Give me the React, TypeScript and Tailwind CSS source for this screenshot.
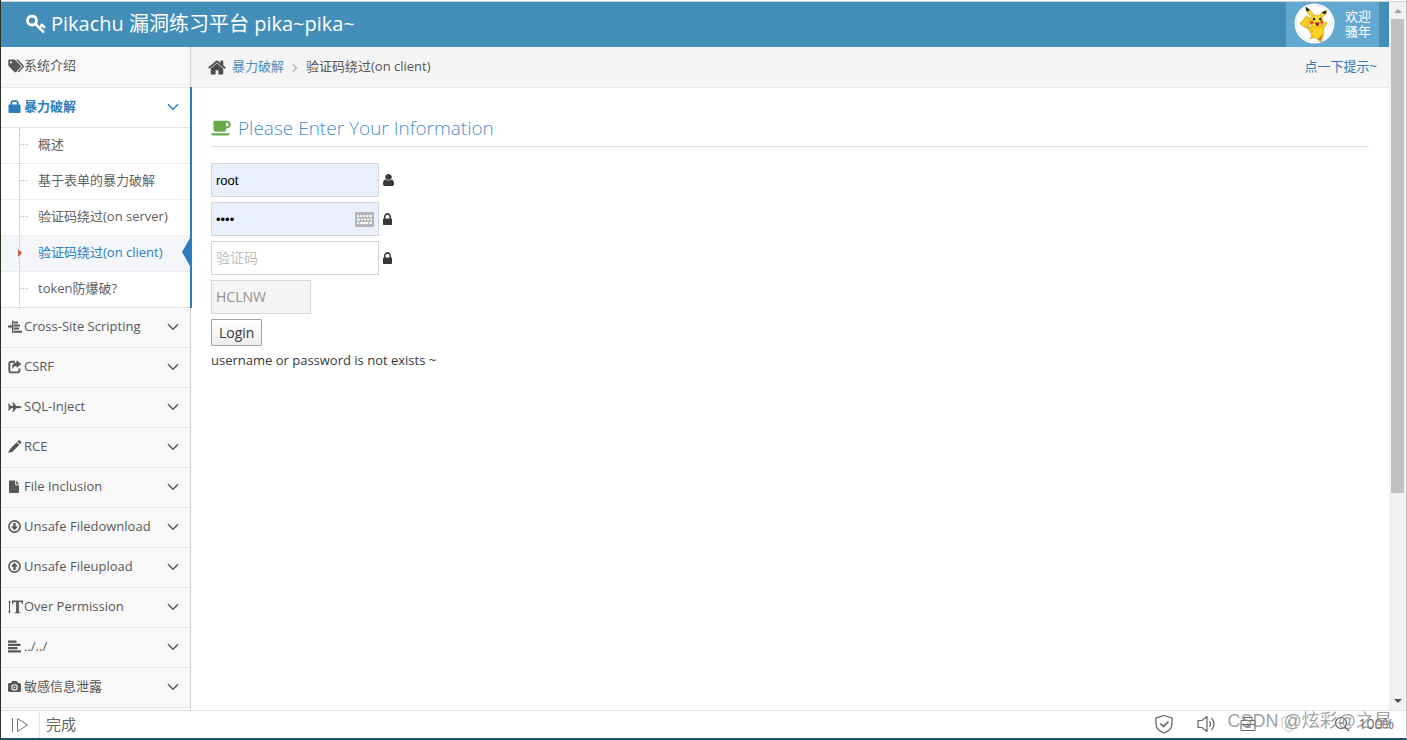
import React from "react";

const Chevron = () => (
  <svg viewBox="0 0 12 8" className="h-2 w-3" fill="none" stroke="currentColor" strokeWidth="1.4">
    <path d="M1 1.200 6 6.200 11 1.200" />
  </svg>
);

const Glyph = ({ children }: { children: React.ReactNode }) => (
  <svg viewBox="0 0 14 14" className="h-3.5 w-3.5" fill="currentColor">
    {children}
  </svg>
);

const KeyIcon = () => (
  <svg viewBox="0 0 20 20" className="h-5 w-5" fill="none" stroke="currentColor">
    <circle cx="6" cy="6.500" r="4.500" strokeWidth="2.800" />
    <path d="m9 9.500 8.300 8.300" strokeWidth="2.500" strokeLinecap="round" />
    <path d="m13.200 14 3.200-3.200" strokeWidth="2" />
    <path d="m15.700 10.600 2.600 2.600" strokeWidth="2.500" strokeLinecap="round" />
  </svg>
);

const HomeIcon = () => (
  <svg viewBox="64 192 1664 1408" className="h-[17px] w-[18px]" fill="currentColor">
    <path d="M1472 992v480q0 26-19 45t-45 19h-384v-384h-256v384h-384q-26 0-45-19t-19-45v-480q0-1 .5-3t.5-3l575-474 575 474q1 2 1 6zm223-69l-62 74q-8 9-21 11h-3q-13 0-21-7l-692-577-692 577q-12 8-24 7-13-2-21-11l-62-74q-8-10-7-23.500t11-21.500l719-599q32-26 76-26t76 26l244 204v-195q0-14 9-23t23-9h192q14 0 23 9t9 23v408l219 182q10 8 11 21.500t-7 23.500z" />
  </svg>
);

const UserIcon = () => (
  <svg viewBox="256 128 1280 1536" className="h-3 w-[11px]" preserveAspectRatio="none" fill="currentColor">
    <path d="M1536 1399q0 109-62.500 187t-150.500 78h-854q-88 0-150.500-78t-62.500-187q0-85 8.500-160.500t31.500-152 58.500-131 94-89 134.500-34.500q131 128 313 128t313-128q76 0 134.500 34.500t94 89 58.500 131 31.500 152 8.500 160.500zm-256-887q0 159-112.500 271.500t-271.500 112.500-271.500-112.500-112.500-271.500 112.500-271.500 271.500-112.500 271.500 112.500 112.500 271.500z" />
  </svg>
);

const LockIcon = () => (
  <svg viewBox="320 128 1152 1408" className="h-3 w-[9px]" preserveAspectRatio="none" fill="currentColor">
    <path d="M640 768h512v-192q0-106-75-181t-181-75-181 75-75 181v192zm832 96v576q0 40-28 68t-68 28h-960q-40 0-68-28t-28-68v-576q0-40 28-68t68-28h32v-192q0-184 132-316t316-132 316 132 132 316v192h32q40 0 68 28t28 68z" />
  </svg>
);

const TagsIcon = () => (
  <svg viewBox="0 0 16 14" className="h-3.5 w-4 shrink-0" fill="currentColor">
    <path fillRule="evenodd" d="M1.200.5h4.600c.5 0 1 .2 1.400.6l5.400 5.400c.5.500.5 1.200 0 1.700l-4.500 4.700c-.5.500-1.200.5-1.700 0L1 7.500C.6 7.100.3 6.500.3 6V1.300c0-.4.4-.8.9-.8ZM3 2.200a1.100 1.100 0 1 0 0 2.200 1.100 1.100 0 0 0 0-2.200Z" />
    <path d="M8 .5h1c.5 0 1 .2 1.400.6l5.200 5.400c.5.500.5 1.200 0 1.700l-4.500 4.700c-.6.500-1.200.5-1.700-.1l4.300-4.500c.5-.5.500-1.100 0-1.600Z" />
  </svg>
);

const PadlockIcon = () => (
  <Glyph>
    <path fillRule="evenodd" d="M2.500 4.500V3C2.500 1.400 3.600.3 5 .3h3c1.400 0 2.500 1.100 2.500 2.700v1.500h1.300c.4 0 .7.3.7.7v7.100c0 .4-.3.7-.7.7H1.200c-.4 0-.7-.3-.7-.7V5.200c0-.4.3-.7.7-.7ZM4.200 4.500h4.600V3.200c0-.8-.4-1.300-1.100-1.300H5.300c-.7 0-1.100.5-1.100 1.300Z" />
  </Glyph>
);

const OutlineIcon = () => (
  <Glyph>
    <path d="M0 5.500h2.500V4L4 6.500 2.500 9V7.500H0ZM4 .5h1.500v12.500H4ZM6 1.500h4v2H6ZM6 4.500h6v2H6ZM6 7.500h5v2H6ZM6 10.800h8v2H6Z" />
  </Glyph>
);

const ShareIcon = () => (
  <Glyph>
    <path fill="none" stroke="currentColor" strokeWidth="1.900" d="M7 1.800H3.500C2.200 1.800 1.300 2.700 1.300 4v6.200C1.300 11.500 2.200 12.400 3.500 12.400h5.800c1.300 0 2.200-.9 2.200-2.200V8.500" />
    <path d="M8.600.3 13.300 4.100 8.600 8V5.900C6.500 5.800 5.300 6.600 4.600 9 3.400 5.600 5.100 2.600 8.600 2.500Z" />
  </Glyph>
);

const PlaneIcon = () => (
  <Glyph>
    <path d="M0 3.800h1L3 6h2.200L4.500 2.500h1.200L8.200 6h3l2.800.9v.4l-2.800.9h-3l-2.500 3.500H4.500l.7-3.500H3l-2 2.200H0l.8-2.700L.2 7.100l.6-.6Z" />
  </Glyph>
);

const PencilIcon = () => (
  <Glyph>
    <path d="M10.300.7c.5-.6 1.100-.6 1.600-.1l1 1c.5.500.5 1.100 0 1.700l-.9.900-2.600-2.600ZM8.700 2.300l2.600 2.600-6.900 6.900L.3 13.100l1.500-3.900Z" />
  </Glyph>
);

const FileIcon = () => (
  <Glyph>
    <path d="M1 .5h6.200v4c0 .5.300.8.800.8h3v7c0 .4-.3.700-.7.700H1.700c-.4 0-.7-.3-.7-.7ZM8.200.6 11 4.300H8.200Z" />
  </Glyph>
);

const CameraIcon = () => (
  <Glyph>
    <path fillRule="evenodd" d="M1.500 3H3l1-1.700c.2-.3.400-.4.700-.4h3.600c.3 0 .5.1.7.4L10 3h1.500c.8 0 1.500.7 1.500 1.500v6c0 .8-.7 1.500-1.500 1.500h-10C.7 12 0 11.300 0 10.500v-6C0 3.700.7 3 1.500 3Zm5 1.200a3.200 3.200 0 1 0 0 6.400 3.200 3.200 0 0 0 0-6.400Z" />
    <path fillRule="evenodd" d="M6.500 5.300a2.100 2.100 0 1 0 0 4.200 2.100 2.100 0 0 0 0-4.200Zm0 1.300a.8.8 0 1 1 0 1.600.8.8 0 0 1 0-1.600Z" />
  </Glyph>
);

const CircleArrow = ({ up }: { up: boolean }) => (
  <Glyph>
    <circle cx="6.500" cy="6.500" r="5.600" fill="none" stroke="currentColor" strokeWidth="1.600" />
    <path d={up ? "M6.500 2.800 10 6.500H7.700v3.400H5.300V6.500H3Z" : "M6.500 10.200 10 6.500H7.700V3.100H5.300v3.400H3Z"} />
  </Glyph>
);

const TextHeightIcon = () => (
  <svg viewBox="0 0 16 14" className="h-3.5 w-4" fill="currentColor">
    <path d="M1.500.3 2.900 2.500H2v8.800h.9L1.500 13.500.1 11.300H1V2.500H.1ZM4 .5h11v3.700h-.7c-.3-1.600-1-2.200-2.900-2.200h-.5v9.200c0 .9.400 1.200 1.700 1.200v.8H6.400v-.8c1.300 0 1.700-.3 1.700-1.200V2h-.5c-1.900 0-2.600.6-2.900 2.200H4Z" />
  </svg>
);

const AlignIcon = () => (
  <Glyph>
    <path d="M0 .5h8.500v2.200H0ZM0 3.700h12.500v2.200H0ZM0 7h9.500v2.200H0ZM0 10.300h13v2.200H0Z" />
  </Glyph>
);

const CupIcon = () => (
  <svg viewBox="0 0 20 16" className="h-4 w-5" fill="#69aa46">
    <path fillRule="evenodd" d="M2.500.8h13c2.600 0 4.300 1.500 4.300 3.800s-1.700 3.900-4.300 3.900h-.4v.9c0 1.400-1 2.300-2.400 2.300H4.900c-1.400 0-2.400-.9-2.400-2.300ZM15.100 2.800v3.700h.6c1.200 0 2-.7 2-1.900s-.8-1.800-2-1.800ZM0 13.200h19c0 1.400-1.200 2.200-2.600 2.200H2.600C1.200 15.400 0 14.600 0 13.200Z" />
  </svg>
);

const Avatar = () => (
  <svg viewBox="0 0 42 42" className="h-[41px] w-[41px] shrink-0" role="img" aria-label="Pikachu">
    <circle cx="21" cy="21" r="20.500" fill="#fff" />
    <circle cx="21" cy="21" r="18.800" fill="none" stroke="#cfe0ec" strokeWidth=".8" strokeDasharray="9 2" />
    <path d="m17 27-4-1 .5-2.500-2 2-5.500-4.500L13 13l3.500 2.500L17 22l-3 2 4 2Z" fill="#f7cb1d" stroke="#b98b1d" strokeWidth=".5" />
    <path d="M18.500 15C15 12 12.500 8 12 4c4 2.500 7.500 6 9 9.500ZM26 13c1.500-3 4-5 7.500-5C33 11 31 13.500 28 15Z" fill="#fadb2c" stroke="#a77d20" strokeWidth=".5" />
    <path d="M12 4c0 2 .7 4 1.500 5.200L16.500 7ZM33.500 8C31 8 29.500 9 28.500 10.300l3.800 1.200Z" fill="#28201b" />
    <path d="M17.500 23c-2 5-.5 11 3 12.500l4 1.500 2.500 3 2-1-.3-3c2.300-3 2.300-9 .3-14Z" fill="#fbd21c" stroke="#bd8d1b" strokeWidth=".5" />
    <path d="M24 37c2-1 4.500-3 5-6 .5 4-1.500 6-2 8Z" fill="#c27a17" />
    <ellipse cx="23" cy="18.500" rx="6.800" ry="6.300" fill="#ffdc28" stroke="#b98b1d" strokeWidth=".5" />
    <path d="m18 26-3.500-2 .5 4 4 2ZM28 24l4.500-5 1.700 1.500L30 27ZM19 33l-3 3.500 4.500-.7Z" fill="#fbd21c" stroke="#bd8d1b" strokeWidth=".5" />
    <circle cx="20.500" cy="16.500" r="1.300" fill="#272322" />
    <circle cx="27" cy="16.500" r="1.300" fill="#272322" />
    <circle cx="18.300" cy="20" r="1.700" fill="#e9402c" />
    <circle cx="28.500" cy="19.500" r="1.700" fill="#e9402c" />
    <path d="M21.500 19.500q2.500 1.300 4.500 0 0 4-2 4t-2.500-4Z" fill="#8e2a22" />
  </svg>
);

const KeyboardIcon = () => (
  <svg viewBox="0 0 19 15" className="h-[15px] w-[19px]">
    <rect width="19" height="15" rx="1" fill="#b5b5b5" />
    <path d="M2 4h2m1 0h2m1 0h2m1 0h2m1 0h3M2 7.500h3m1 0h2m1 0h2m1 0h2m1 0h2M2 11h2m1 0h8m1 0h3" stroke="#f4f6fb" strokeWidth="2" />
  </svg>
);

const subItems = ["概述", "基于表单的暴力破解", "验证码绕过(on server)", "验证码绕过(on client)", "token防爆破?"];
const ACTIVE_SUB = 3;

const menu = [
  { label: "Cross-Site Scripting", icon: <OutlineIcon /> },
  { label: "CSRF", icon: <ShareIcon /> },
  { label: "SQL-Inject", icon: <PlaneIcon /> },
  { label: "RCE", icon: <PencilIcon /> },
  { label: "File Inclusion", icon: <FileIcon /> },
  { label: "Unsafe Filedownload", icon: <CircleArrow up={false} /> },
  { label: "Unsafe Fileupload", icon: <CircleArrow up /> },
  { label: "Over Permission", icon: <TextHeightIcon /> },
  { label: "../../", icon: <AlignIcon /> },
  { label: "敏感信息泄露", icon: <CameraIcon /> },
];

function Sidebar() {
  return (
    <nav className="relative z-10 w-[190px] shrink-0 border-r border-[#ccc] bg-[#f8f8f8]">
      <a href="#intro" className="flex h-[41px] items-center border-b border-[#e5e5e5] pb-0.5 pl-[7px]">
        <TagsIcon />
        <span>系统介绍</span>
      </a>
      <div className="-mt-px -mr-[2px] border-r-2 border-[#2b7dbc] bg-white">
        <button className="flex h-[41px] w-full items-center border-y border-[#e5e5e5] pr-[11px] pb-0.5 pl-[7px] font-bold text-[#2b7dbc]">
          <span className="w-4"><PadlockIcon /></span>
          <span className="flex-1 text-left">暴力破解</span>
          <Chevron />
        </button>
        <ul className="relative">
          <li className="absolute inset-y-0 left-[18px] z-10 border-l border-dotted border-[#9dbdd6]" aria-hidden="true" />
          {subItems.map((label, i) => (
            <li key={label} className={i === subItems.length - 1 ? "h-9 border-b border-[#e5e5e5]" : "relative h-9 border-b border-dotted border-[#dcdcdc]"}>
              <a href="#sub" className={i === ACTIVE_SUB ? "flex h-full items-center bg-[#f4f6fa] pb-0.5 pl-[17px] text-[#2b7dbc]" : "flex h-full items-center pb-0.5 pl-[18px] text-[#616161]"}>
                {i === ACTIVE_SUB ? (
                  <svg viewBox="0 0 4 8" className="relative z-20 mr-4 h-2 w-1 bg-[#f4f6fa]" fill="#c86139">
                    <path d="M0 0 4 4 0 8Z" />
                  </svg>
                ) : (
                  <span className="mr-2.5 w-[9px] border-t border-dotted border-[#9dbdd6]" />
                )}
                {label}
              </a>
              {i === ACTIVE_SUB && (
                <svg viewBox="0 0 8 28" className="absolute top-0.5 right-0 h-7 w-2" fill="#2b7dbc">
                  <path d="M8 0v28L0 14Z" />
                </svg>
              )}
            </li>
          ))}
        </ul>
      </div>
      {menu.map((m) => (
        <button key={m.label} className="flex h-10 w-full items-center border-b border-[#e5e5e5] pr-[11px] pb-0.5 pl-[7px] text-left">
          <span className="w-4 shrink-0">{m.icon}</span>
          <span className="flex-1">{m.label}</span>
          <Chevron />
        </button>
      ))}
    </nav>
  );
}

function LoginForm() {
  const field = "h-[34px] w-[168px] border border-[#d5d5d5] px-1 outline-none";
  return (
    <form className="flex flex-col items-start gap-[5px] pt-4" onSubmit={(e) => e.preventDefault()}>
      <label className="flex items-center gap-1">
        <input aria-label="username" defaultValue="root" className={`${field} bg-[#e8f0fe] font-['Liberation_Sans',sans-serif] text-black`} />
        <UserIcon />
      </label>
      <div className="flex items-center gap-1">
        <div className="relative">
          <input type="password" aria-label="password" defaultValue="root" className={`${field} block bg-[#e8f0fe] font-['Liberation_Sans',sans-serif] text-black`} />
          <span className="absolute top-2.5 right-[5px]"><KeyboardIcon /></span>
        </div>
        <LockIcon />
      </div>
      <label className="flex items-center gap-1">
        <input aria-label="验证码" placeholder="验证码" className={`${field} pb-0.5 text-sm placeholder:text-[#c0c0c0]`} />
        <LockIcon />
      </label>
      <input aria-label="code" readOnly value="HCLNW" className="h-[34px] w-[100px] border border-[#d5d5d5] bg-[#f5f5f5] px-1 pb-0.5 text-sm text-[#939192] outline-none" />
      <button className="h-[27px] rounded-[1px] border border-[#a3a3a3] bg-linear-to-b from-white to-[#eee] px-[7px] text-sm leading-6">Login</button>
      <p className="leading-[18px]">username or password is not exists ~</p>
    </form>
  );
}

function Scrollbar() {
  return (
    <div className="flex w-[17px] shrink-0 flex-col items-center bg-[#f1f1f1]" aria-hidden="true">
      <svg viewBox="0 0 16 17" className="h-[17px] w-4 shrink-0" fill="#a3a3a3"><path d="m4 11 4-4 4 4Z" /></svg>
      <div className="h-[67%] w-[13px] bg-[#c1c1c1]" />
      <div className="flex-1" />
      <svg viewBox="0 0 16 17" className="h-[17px] w-4 shrink-0" fill="#505050"><path d="m4 6 4 4 4-4Z" /></svg>
    </div>
  );
}

function StatusBar() {
  return (
    <footer className="relative flex h-7 shrink-0 items-center border-t border-[#e2e2e2] bg-white text-sm text-[#666]">
      <div className="flex h-full w-[39px] items-center justify-center border-r border-[#e2e2e2]">
        <svg viewBox="0 0 18 16" className="h-4 w-[18px]" fill="none" stroke="#777"><path d="M1.500 1v14M6.500 1.500v13L16.500 8Z" /></svg>
      </div>
      <span className="flex-1 pl-1.5 text-[15px]">完成</span>
      <div className="flex items-center gap-6 pr-3 pb-0.5">
        <svg viewBox="0 0 18 20" className="h-5 w-[18px]" fill="none" stroke="#666" strokeWidth="1.300"><path d="M9 1.500 17 4v6c0 4-3 7-8 9-5-2-8-5-8-9V4Z" /><path d="m5.500 9.500 3 3 5-5" strokeWidth="1.700" /></svg>
        <svg viewBox="0 0 19 16" className="h-4 w-[19px]" fill="none" stroke="#666" strokeWidth="1.200"><path d="M1 4.500h4l5-4v15l-5-4H1ZM12.500 5q2 3 0 6M14.500 2q5 6 0 12" /></svg>
        <svg viewBox="0 0 16 16" className="h-4 w-4" fill="none" stroke="#666"><path d="M1 4.500h14v4H1ZM1 8.500v6h14v-6M4 4.500v-3h8v3M8 7v5M5 11h6" /></svg>
        <svg viewBox="0 0 18 18" className="h-[18px] w-[18px]" fill="none" stroke="#c4c4c4"><path d="m9 1 7 2v6c0 4-3 6-7 8-4-2-7-4-7-8V3Z" /><path d="M6 13 9 5l3 8M7 10h4" /></svg>
        <div className="ml-3 flex items-center gap-2">
          <svg viewBox="0 0 16 16" className="h-4 w-4" fill="none" stroke="#555" strokeWidth="1.200"><circle cx="7" cy="7" r="5.500" /><path d="m11 11 4 4M4.500 7h5" /></svg>
          <span>100%</span>
        </div>
      </div>
      <span className="pointer-events-none absolute -top-1 right-3.5 font-['Liberation_Sans','Noto_Sans_CJK_SC',sans-serif] text-[18px] leading-7 text-[#888]/80">CSDN @炫彩@之星</span>
    </footer>
  );
}

export default function App() {
  return (
    <div className="flex h-screen flex-col overflow-hidden border-x border-b-2 border-r-[#c4c4c4] border-b-[#20516a] border-l-[#263320] bg-white pt-px font-['Open_Sans','Noto_Sans_CJK_SC',sans-serif] text-[13px] text-[#393939]">
      <div className="flex min-h-0 flex-1 border-t border-[#d0d0d0]">
        <div className="flex min-w-0 flex-1 flex-col">
          <header className="flex h-[45px] shrink-0 items-center justify-between bg-[#438eb9] pr-2.5 text-white">
            <a href="#home" className="flex items-center gap-[5px] pb-0.5 pl-[25px] text-xl">
              <KeyIcon />
              <span>Pikachu 漏洞练习平台 pika~pika~</span>
            </a>
            <button className="flex h-full w-[93px] items-center gap-2.5 bg-[#62a8d1] pb-0.5 pl-2 text-left leading-[15px]">
              <Avatar />
              <span>欢迎<br />骚年</span>
            </button>
          </header>
          <div className="flex min-h-0 flex-1 overflow-hidden text-[#585858]">
            <Sidebar />
            <main className="min-w-0 flex-1 bg-white text-[#393939]">
              <div className="flex h-[41px] items-center border-b border-[#e5e5e5] bg-[#f5f5f5] pr-3 pl-[17px]">
                <span className="text-[#4c4c4c]"><HomeIcon /></span>
                <a href="#brute" className="ml-1.5 text-[#4c8fbd]">暴力破解</a>
                <svg viewBox="0 0 6 8" className="mx-2 mt-0.5 h-2 w-1.5" fill="none" stroke="#b2b6bf" strokeWidth="1.500"><path d="m1 .5 3.500 3.500L1 7.500" /></svg>
                <span className="flex-1 text-[#555]">验证码绕过(on client)</span>
                <a href="#tip" className="text-[#337ab7]">点一下提示~</a>
              </div>
              <section className="px-5 pt-[22px]">
                <h1 className="flex h-[37px] items-center gap-[7px] border-b border-[#d5e3ef] text-[19px] font-light text-[#478fca]">
                  <CupIcon />
                  Please Enter Your Information
                </h1>
                <LoginForm />
              </section>
            </main>
          </div>
        </div>
        <Scrollbar />
      </div>
      <StatusBar />
    </div>
  );
}
